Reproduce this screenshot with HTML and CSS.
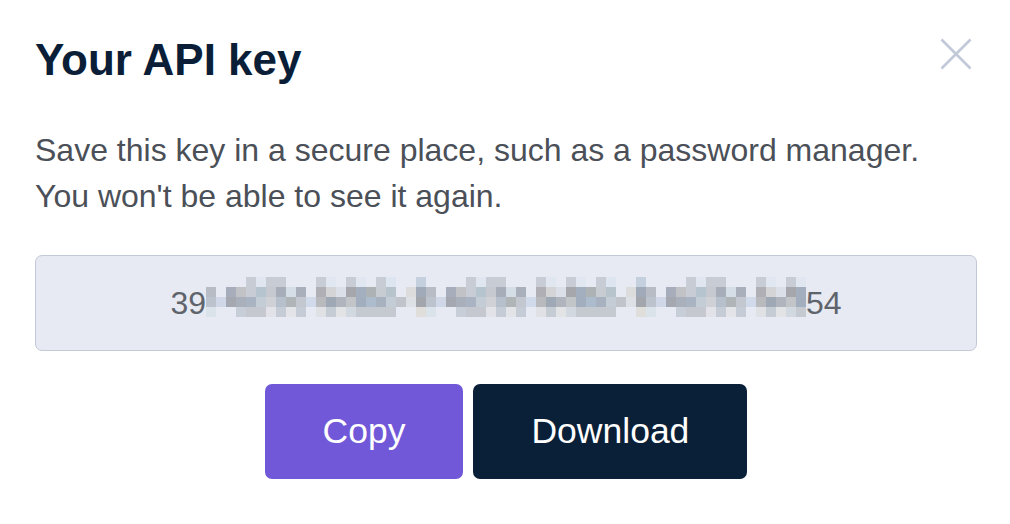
FILE: index.html
```html
<!DOCTYPE html>
<html lang="en">
<head>
<meta charset="utf-8">
<title>Your API key</title>
<link rel="stylesheet" href="styles.css">
</head>
<body>
<div class="dialog">
  <div class="header">
    <h1 class="title">Your API key</h1>
    <button class="close" aria-label="Close">
      <svg width="32" height="32" viewBox="0 0 32 32"><path d="M1.5 1.5L30.5 30.5M30.5 1.5L1.5 30.5" stroke="#c1c8d7" stroke-width="2.6" fill="none"/></svg>
    </button>
  </div>
  <p class="desc">Save this key in a secure place, such as a password manager.<br>You won't be able to see it again.</p>
  <div class="keybox">
    <span class="keytext">39</span>
    <svg class="mosaic" width="600" height="40" viewBox="0 0 600 40" shape-rendering="crispEdges">
      <defs>
        <pattern id="m" width="220" height="40" patternUnits="userSpaceOnUse">
          <rect x="0" y="10" width="10" height="10" fill="#b8bcc4"/>
          <rect x="0" y="20" width="10" height="10" fill="#bcc3cc"/>
          <rect x="0" y="30" width="10" height="10" fill="#dae2ea"/>
          <rect x="10" y="20" width="10" height="10" fill="#d0d8e8"/>
          <rect x="20" y="10" width="10" height="10" fill="#a7adbb"/>
          <rect x="20" y="20" width="10" height="10" fill="#a5a8b0"/>
          <rect x="30" y="10" width="10" height="10" fill="#c0c2c6"/>
          <rect x="30" y="20" width="10" height="10" fill="#a9b0bb"/>
          <rect x="30" y="30" width="10" height="10" fill="#c8ced7"/>
          <rect x="40" y="0" width="10" height="10" fill="#c8ccd4"/>
          <rect x="40" y="10" width="10" height="10" fill="#c8ccd4"/>
          <rect x="40" y="20" width="10" height="10" fill="#a9b3c1"/>
          <rect x="40" y="30" width="10" height="10" fill="#c5c8cf"/>
          <rect x="50" y="0" width="10" height="10" fill="#dfe6f0"/>
          <rect x="50" y="10" width="10" height="10" fill="#b5c4cf"/>
          <rect x="50" y="20" width="10" height="10" fill="#c4ccd6"/>
          <rect x="50" y="30" width="10" height="10" fill="#c5c8cf"/>
          <rect x="60" y="0" width="10" height="10" fill="#c8ccd4"/>
          <rect x="60" y="10" width="10" height="10" fill="#c6cad0"/>
          <rect x="60" y="20" width="10" height="10" fill="#cfd1d6"/>
          <rect x="60" y="30" width="10" height="10" fill="#e1e3e8"/>
          <rect x="70" y="0" width="10" height="10" fill="#c8ccd4"/>
          <rect x="70" y="10" width="10" height="10" fill="#a7adb9"/>
          <rect x="70" y="20" width="10" height="10" fill="#b5c0cc"/>
          <rect x="70" y="30" width="10" height="10" fill="#c6ccd5"/>
          <rect x="80" y="10" width="10" height="10" fill="#d5dde6"/>
          <rect x="80" y="20" width="10" height="10" fill="#b0b5b8"/>
          <rect x="80" y="30" width="10" height="10" fill="#e2e4e8"/>
          <rect x="90" y="10" width="10" height="10" fill="#a9afbb"/>
          <rect x="90" y="20" width="10" height="10" fill="#c3c7cf"/>
          <rect x="90" y="30" width="10" height="10" fill="#c6ccd5"/>
          <rect x="100" y="20" width="10" height="10" fill="#d0daea"/>
          <rect x="110" y="0" width="10" height="10" fill="#c8ccd4"/>
          <rect x="110" y="10" width="10" height="10" fill="#b0afb6"/>
          <rect x="110" y="20" width="10" height="10" fill="#b8babd"/>
          <rect x="110" y="30" width="10" height="10" fill="#dfe1e5"/>
          <rect x="120" y="0" width="10" height="10" fill="#e0e7f0"/>
          <rect x="120" y="10" width="10" height="10" fill="#d4d4d6"/>
          <rect x="120" y="20" width="10" height="10" fill="#9fa8b5"/>
          <rect x="120" y="30" width="10" height="10" fill="#c6ccd4"/>
          <rect x="130" y="10" width="10" height="10" fill="#dbe0e8"/>
          <rect x="130" y="20" width="10" height="10" fill="#afb4bd"/>
          <rect x="130" y="30" width="10" height="10" fill="#e1e3e5"/>
          <rect x="140" y="0" width="10" height="10" fill="#c8ccd4"/>
          <rect x="140" y="10" width="10" height="10" fill="#a5a7ac"/>
          <rect x="140" y="20" width="10" height="10" fill="#c2c5c7"/>
          <rect x="140" y="30" width="10" height="10" fill="#d2d8e0"/>
          <rect x="150" y="0" width="10" height="10" fill="#e0e7f0"/>
          <rect x="150" y="10" width="10" height="10" fill="#a3afbf"/>
          <rect x="150" y="20" width="10" height="10" fill="#a2aebe"/>
          <rect x="150" y="30" width="10" height="10" fill="#c5c9d0"/>
          <rect x="160" y="10" width="10" height="10" fill="#adb2b5"/>
          <rect x="160" y="20" width="10" height="10" fill="#acbccc"/>
          <rect x="160" y="30" width="10" height="10" fill="#c5c9d0"/>
          <rect x="170" y="0" width="10" height="10" fill="#c8ccd4"/>
          <rect x="170" y="10" width="10" height="10" fill="#c7cbd2"/>
          <rect x="170" y="20" width="10" height="10" fill="#a8b1c0"/>
          <rect x="170" y="30" width="10" height="10" fill="#c5c9d0"/>
          <rect x="180" y="0" width="10" height="10" fill="#dde5f0"/>
          <rect x="180" y="10" width="10" height="10" fill="#b7c4cc"/>
          <rect x="180" y="20" width="10" height="10" fill="#c4ccd6"/>
          <rect x="180" y="30" width="10" height="10" fill="#c5c9d0"/>
          <rect x="190" y="20" width="10" height="10" fill="#c2c4cc"/>
          <rect x="200" y="10" width="10" height="10" fill="#dcdcdc"/>
          <rect x="200" y="20" width="10" height="10" fill="#dde0e5"/>
          <rect x="210" y="0" width="10" height="10" fill="#c5d0de"/>
          <rect x="210" y="10" width="10" height="10" fill="#a0aab8"/>
          <rect x="210" y="20" width="10" height="10" fill="#a3a6ac"/>
          <rect x="210" y="30" width="10" height="10" fill="#e0dedb"/>
        </pattern>
      </defs>
      <rect width="600" height="40" fill="url(#m)"/>
    </svg>
    <span class="keytext">54</span>
  </div>
  <div class="actions">
    <button class="btn btn-copy">Copy</button>
    <button class="btn btn-download">Download</button>
  </div>
</div>
</body>
</html>
```

FILE: styles.css
```css
html, body {
  margin: 0;
  padding: 0;
  background: #ffffff;
}

body {
  font-family: "Liberation Sans", Arial, sans-serif;
}

.dialog {
  padding: 34px 33px 0 35px;
}

.header {
  display: flex;
  justify-content: space-between;
  align-items: flex-start;
}

.title {
  margin: 0;
  font-size: 44px;
  font-weight: 700;
  color: #0b1e37;
  line-height: 51px;
}

.close {
  margin: 4px 5px 0 0;
  padding: 0;
  border: 0;
  background: none;
  width: 32px;
  height: 32px;
  display: flex;
  cursor: pointer;
}

.desc {
  margin: 42px 0 0 0;
  font-size: 32px;
  line-height: 46px;
  color: #4b5058;
}

.keybox {
  margin-top: 36px;
  height: 94px;
  border: 1px solid #c3c9d7;
  border-radius: 7px;
  background: #e7eaf2;
  display: flex;
  align-items: center;
  justify-content: center;
}

.keytext {
  font-size: 32px;
  color: #5f646c;
}

.mosaic {
  display: block;
  margin-bottom: 12px;
}

.actions {
  margin-top: 33px;
  display: flex;
  justify-content: center;
  gap: 10px;
}

.btn {
  height: 95px;
  padding: 0 58px;
  border: 0;
  border-radius: 7px;
  font-family: "Liberation Sans", Arial, sans-serif;
  font-size: 35.5px;
  color: #ffffff;
  cursor: pointer;
}

.btn-copy {
  background: #7058d8;
}

.btn-download {
  background: #0a1f38;
}
```
